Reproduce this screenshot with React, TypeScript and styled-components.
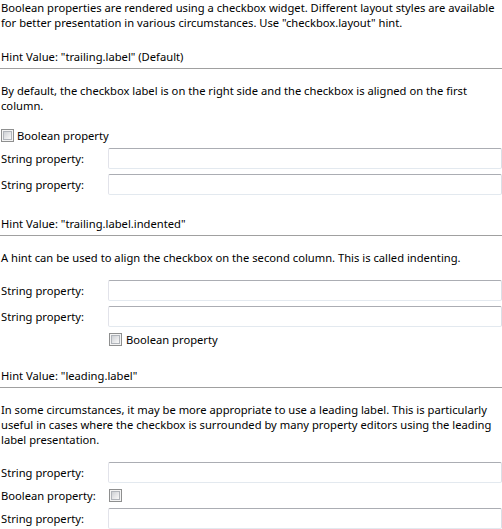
import React from "react";
import styled, { createGlobalStyle } from "styled-components";

const GlobalStyle = createGlobalStyle`
  html, body {
    margin: 0;
    padding: 0;
    background: #ffffff;
  }
  body {
    font-family: "Noto Sans", "Open Sans", sans-serif;
    font-size: 11.2px;
    color: #000000;
  }
`;

const Page = styled.div`
  width: 502px;
  box-sizing: border-box;
  padding-left: 1px;
  display: flex;
  flex-direction: column;
`;

const Text = styled.p`
  margin: 0;
  line-height: 15px;
`;

const Section = styled.section`
  margin-top: 21px;
  display: flex;
  flex-direction: column;

  &:first-of-type {
    margin-top: 19px;
  }
`;

const HintTitle = styled.div`
  line-height: 15px;
  padding-bottom: 4px;
  margin-left: -1px;
  padding-left: 1px;
  border-bottom: 1px solid #a0a0a0;
`;

const Description = styled(Text)`
  margin-top: 14px;
`;

const Form = styled.div`
  margin-top: 15px;
  display: grid;
  grid-template-columns: 107px 1fr;
  row-gap: 5px;
  align-items: center;
`;

const FieldLabel = styled.span`
  line-height: 15px;
  white-space: nowrap;
`;

const TextField = styled.input.attrs({ type: "text" })`
  box-sizing: border-box;
  width: 100%;
  height: 21px;
  margin: 0;
  padding: 0 3px;
  border: 1px solid;
  border-color: #abadb3 #dbdfe6 #e3e9ef #e2e3ea;
  border-radius: 2px;
  background: #ffffff;
  font: inherit;
  outline: none;
`;

const CheckRow = styled.label<{ $column?: "full" | "second" }>`
  grid-column: ${(p) => (p.$column === "second" ? "2" : "1 / -1")};
  display: flex;
  align-items: center;
  gap: ${(p) => (p.$column === "second" ? "4px" : "3px")};
  line-height: 15px;
  margin-left: ${(p) => (p.$column === "second" ? "1px" : "0")};
`;

const Box = styled.span`
  position: relative;
  flex: none;
  box-sizing: border-box;
  width: 13px;
  height: 13px;
  border: 1px solid #8e8f8f;
  background: #f4f4f4;

  &::after {
    content: "";
    position: absolute;
    inset: 1px;
    border: 1px solid #b0b4ba;
    background: linear-gradient(135deg, #cdd0d4 0%, #e6e7e9 55%, #f9f9f9 100%);
  }
`;

const CheckCell = styled.span`
  display: flex;
  align-items: center;
  margin-left: 1px;
`;

function Checkbox({ label, column }: { label: string; column?: "full" | "second" }) {
  return (
    <CheckRow $column={column}>
      <Box />
      {label}
    </CheckRow>
  );
}

function StringRow() {
  return (
    <>
      <FieldLabel>String property:</FieldLabel>
      <TextField />
    </>
  );
}

export default function App() {
  return (
    <Page>
      <GlobalStyle />
      <Text>
        Boolean properties are rendered using a checkbox widget. Different layout styles are available
        for better presentation in various circumstances. Use "checkbox.layout" hint.
      </Text>

      <Section>
        <HintTitle>Hint Value: "trailing.label" (Default)</HintTitle>
        <Description>
          By default, the checkbox label is on the right side and the checkbox is aligned on the first
          column.
        </Description>
        <Form>
          <Checkbox label="Boolean property" />
          <StringRow />
          <StringRow />
        </Form>
      </Section>

      <Section>
        <HintTitle>Hint Value: "trailing.label.indented"</HintTitle>
        <Description>
          A hint can be used to align the checkbox on the second column. This is called indenting.
        </Description>
        <Form>
          <StringRow />
          <StringRow />
          <Checkbox label="Boolean property" column="second" />
        </Form>
      </Section>

      <Section>
        <HintTitle>Hint Value: "leading.label"</HintTitle>
        <Description>
          In some circumstances, it may be more appropriate to use a leading label. This is particularly
          useful in cases where the checkbox is surrounded by many property editors using the leading
          label presentation.
        </Description>
        <Form>
          <StringRow />
          <FieldLabel>Boolean property:</FieldLabel>
          <CheckCell>
            <Box />
          </CheckCell>
          <StringRow />
        </Form>
      </Section>
    </Page>
  );
}
